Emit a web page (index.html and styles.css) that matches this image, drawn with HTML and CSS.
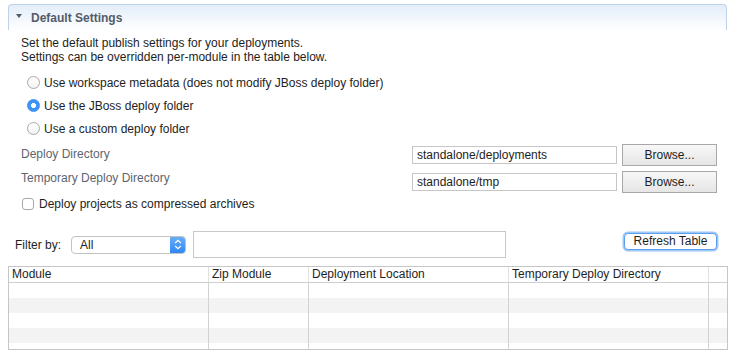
FILE: index.html
```html
<!DOCTYPE html>
<html lang="en">
<head>
    <meta charset="UTF-8">
    <meta name="viewport" content="width=device-width, initial-scale=1.0">
    <title>Deployment Settings</title>
    <link rel="stylesheet" href="styles.css">
</head>
<body>
    <div class="section">
        <div class="section-header">
            <span class="twisty"></span>
            <span class="section-title">Default Settings</span>
        </div>
        <div class="section-body">
            <p class="description">Set the default publish settings for your deployments.<br>Settings can be overridden per-module in the table below.</p>
            <div class="radio-group">
                <div class="radio-row"><span class="radio"></span>Use workspace metadata (does not modify JBoss deploy folder)</div>
                <div class="radio-row"><span class="radio checked"></span>Use the JBoss deploy folder</div>
                <div class="radio-row"><span class="radio"></span>Use a custom deploy folder</div>
            </div>
            <div class="dir-grid">
                <span class="dir-label first">Deploy Directory</span>
                <div class="text-input">standalone/deployments</div>
                <div class="push-button">Browse...</div>
                <span class="dir-label second">Temporary Deploy Directory</span>
                <div class="text-input">standalone/tmp</div>
                <div class="push-button">Browse...</div>
            </div>
            <div class="check-row"><span class="checkbox"></span>Deploy projects as compressed archives</div>
        </div>
    </div>

    <div class="filter-row">
        <span class="filter-label">Filter by:</span>
        <div class="select">
            <span class="select-value">All</span>
            <span class="select-arrows">
                <svg width="8" height="11" viewBox="0 0 8 11"><path d="M1.2 4 L4 1.3 L6.8 4 M1.2 7 L4 9.7 L6.8 7" fill="none" stroke="#fff" stroke-width="1.3"/></svg>
            </span>
        </div>
        <div class="filter-input"></div>
        <div class="focus-button">Refresh Table</div>
    </div>

    <div class="module-table">
        <div class="table-head">
            <div class="cell c1">Module</div>
            <div class="cell c2">Zip Module</div>
            <div class="cell c3">Deployment Location</div>
            <div class="cell c4">Temporary Deploy Directory</div>
            <div class="cell c5"></div>
        </div>
        <div class="table-row"><div class="cell c1"></div><div class="cell c2"></div><div class="cell c3"></div><div class="cell c4"></div><div class="cell c5"></div></div>
        <div class="table-row"><div class="cell c1"></div><div class="cell c2"></div><div class="cell c3"></div><div class="cell c4"></div><div class="cell c5"></div></div>
        <div class="table-row"><div class="cell c1"></div><div class="cell c2"></div><div class="cell c3"></div><div class="cell c4"></div><div class="cell c5"></div></div>
        <div class="table-row"><div class="cell c1"></div><div class="cell c2"></div><div class="cell c3"></div><div class="cell c4"></div><div class="cell c5"></div></div>
        <div class="table-row"><div class="cell c1"></div><div class="cell c2"></div><div class="cell c3"></div><div class="cell c4"></div><div class="cell c5"></div></div>
    </div>
</body>
</html>
```

FILE: styles.css
```css
body {
    margin: 0;
    padding: 4px 9px 0 8px;
    font-family: "Liberation Sans", Arial, sans-serif;
    font-size: 12px;
    color: #1e1e1e;
    background-color: #fff;
}

.section {
    margin-right: 1px;
}

.section-header {
    display: flex;
    align-items: center;
    height: 26px;
    box-sizing: border-box;
    padding-left: 7px;
    border: 1px solid #bcd2ea;
    border-bottom: none;
    border-radius: 4px 4px 0 0;
    background: linear-gradient(#e3edf9, #ffffff);
}

.twisty {
    width: 0;
    height: 0;
    border-left: 3.5px solid transparent;
    border-right: 3.5px solid transparent;
    border-top: 4px solid #535c68;
    margin-top: -3px;
}

.section-title {
    margin-left: 9px;
    font-weight: bold;
    color: #535c68;
}

.section-body {
    padding: 6px 10px 0 13px;
}

.description {
    margin: 0;
    line-height: 14px;
}

.radio-group {
    margin-top: 7px;
    padding-left: 6px;
}

.radio-row {
    display: flex;
    align-items: center;
    height: 23px;
}

.radio {
    width: 13px;
    height: 13px;
    box-sizing: border-box;
    border: 1px solid #a9a9a9;
    border-radius: 50%;
    background: linear-gradient(#ffffff, #f3f3f3);
    margin-right: 4px;
}

.radio.checked {
    border-color: #3a8ff0;
    background: radial-gradient(circle, #ffffff 0, #ffffff 2.2px, #3d95f7 2.8px);
}

.dir-grid {
    display: grid;
    grid-template-columns: 1fr 205px 95px;
    grid-template-rows: 22px 22px;
    column-gap: 5px;
    row-gap: 5px;
    align-items: center;
    margin-top: 4px;
}

.dir-label {
    color: #5c6570;
    align-self: start;
    line-height: 14px;
}

.dir-label.first {
    padding-top: 3px;
}

.dir-label.second {
    padding-top: 0;
}

.text-input {
    height: 18px;
    box-sizing: border-box;
    border: 1px solid #c6c6c6;
    padding-left: 4px;
    line-height: 16px;
    background-color: #fff;
}

.push-button {
    height: 22px;
    box-sizing: border-box;
    border: 1px solid #a8a8a8;
    background: linear-gradient(#f7f7f7, #e6e6e6);
    text-align: center;
    line-height: 20px;
}

.check-row {
    display: flex;
    align-items: center;
    height: 12px;
    margin-top: 5px;
    padding-left: 1px;
}

.checkbox {
    width: 12px;
    height: 12px;
    box-sizing: border-box;
    border: 1px solid #a9a9a9;
    border-radius: 3px;
    background-color: #fff;
    margin-right: 5px;
}

.filter-row {
    display: flex;
    align-items: center;
    height: 27px;
    margin-top: 21px;
    padding-left: 7px;
}

.filter-label {
    width: 56px;
}

.select {
    display: flex;
    align-items: center;
    width: 115px;
    height: 18px;
    box-sizing: border-box;
    border: 1px solid #c3c3c3;
    border-radius: 4px;
    background-color: #fff;
    overflow: hidden;
}

.select-value {
    flex: 1;
    padding-left: 8px;
}

.select-arrows {
    display: flex;
    align-items: center;
    justify-content: center;
    width: 15px;
    height: 100%;
    background: linear-gradient(#69adfb, #2f86f4);
}

.filter-input {
    width: 313px;
    height: 27px;
    box-sizing: border-box;
    border: 1px solid #c8c8c8;
    margin-left: 7px;
}

.focus-button {
    margin-left: auto;
    margin-right: 11px;
    margin-top: -6px;
    width: 93px;
    height: 17px;
    box-sizing: border-box;
    border: 1px solid #5d9ff0;
    border-radius: 4px;
    box-shadow: 0 0 0 1.5px #9ec6f6;
    background-color: #fff;
    text-align: center;
    line-height: 15px;
}

.module-table {
    margin-top: 8px;
    height: 84px;
    box-sizing: border-box;
    border: 1px solid #c6c6c6;
    overflow: hidden;
}

.table-head, .table-row {
    display: flex;
}

.table-head {
    height: 16px;
    box-sizing: border-box;
    border-bottom: 1px solid #cfcfcf;
}

.table-row {
    height: 15px;
}

.table-row:nth-child(odd) {
    background-color: #f3f3f3;
}

.cell {
    box-sizing: border-box;
    border-right: 1px solid #d2d2d2;
    padding-left: 3px;
    line-height: 15px;
}

.table-head .cell {
    border-right-color: #e2e2e2;
}

.c1 { width: 200px; }
.c2 { width: 100px; }
.c3 { width: 200px; }
.c4 { width: 200px; }
.c5 { flex: 1; border-right: none; }
```
